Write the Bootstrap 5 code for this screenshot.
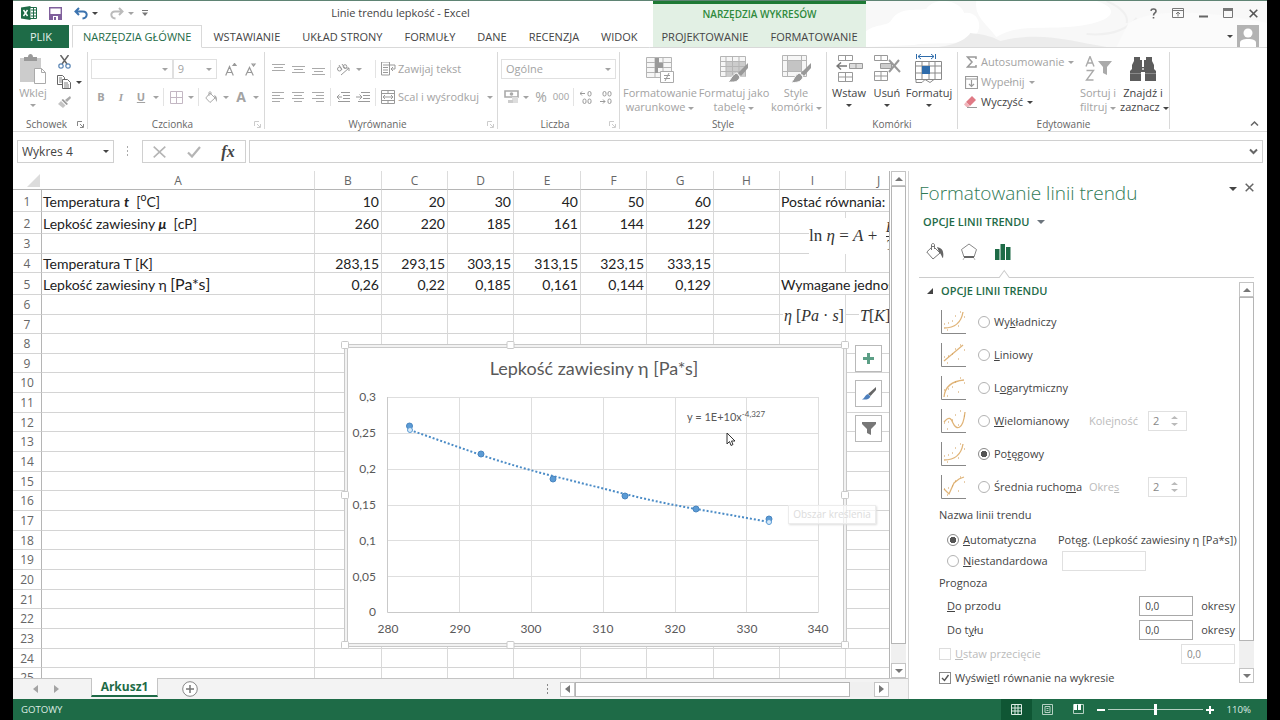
<!DOCTYPE html>
<html lang="pl">
<head>
<meta charset="utf-8">
<meta name="viewport" content="width=device-width, initial-scale=1">
<title>Linie trendu lepkość - Excel</title>
<link href="https://cdn.jsdelivr.net/npm/bootstrap@5.3.0/dist/css/bootstrap.min.css" rel="stylesheet">
<style>
:root{--xl:#1e6b47;--ink:#444;--dim:#a3a3a3;--rule:#d9d9d9;--ui:"Open Sans","Noto Sans",sans-serif;--cell:Lato,"Open Sans",sans-serif}
body{background:#000;font-family:var(--ui);font-size:11px;line-height:14px;color:var(--ink);padding:0 13px}
.xl-app{min-height:100vh;background:#fff;border-top:1px solid #5f8474}
button{border:0;background:none;padding:0;color:inherit;font:inherit;line-height:inherit}
select,input{font:inherit;color:inherit;border-radius:0}
svg{display:block;flex:none}
.off{color:var(--dim)}
.crt{display:inline-block;border:3px solid transparent;border-top-color:currentColor;border-bottom:0;vertical-align:middle;flex:none}
/* title bar and tabs */
.xl-top{height:47px}
.xl-left{width:640px}
.xl-title{height:24px;font-size:11px}
.xl-tabs{height:23px;font-size:11px}
.xl-tab{height:23px;padding:0 11px;color:var(--ink);text-decoration:none;line-height:23px;white-space:nowrap;border-bottom:1px solid var(--rule)}
.xl-file{background:var(--xl);color:#e5f1ea;width:56px;text-align:center;border-color:var(--xl);padding:0}
.xl-tab.on{color:var(--xl);border:1px solid var(--rule);border-bottom-color:#fff;margin-left:3px;padding:0 10px;line-height:21px}
.xl-ctx{width:213px;background:#e2f0e4;border-top:3px solid #1e7a35}
.xl-ctx .cap{height:21px;font-size:10px;line-height:20px;color:#2f8a3c}
.xl-art{background:#fdfdfd;border-bottom:1px solid var(--rule)}
.xl-art>svg.sky{position:absolute;inset:0;width:100%;height:100%}
.gap5{gap:5px}
/* ribbon */
.xl-ribbon{height:84px;border-bottom:1px solid var(--rule)}
.grp{border-right:1px solid var(--rule);margin:4px 0 2px;height:77px;padding:0 3px}
.grp .body{height:66px}
.grp .cap{font-size:10px;line-height:12px;height:12px;color:#666}
.g1{width:75px}.g2{width:177px}.g3{width:233px}.g4{width:122px}.g5{width:207px}.g6{width:131px}.g7{width:212px}
.bg1{line-height:14px;text-align:center;white-space:nowrap;align-self:flex-start}
.bg1 .pic{height:34px;display:flex;align-items:center;justify-content:center}
.w38{width:38px}.w44{width:44px}.w46{width:46px}.w50{width:50px}.w74{width:74px}
.c20{width:20px;height:20px;display:flex;align-items:center;justify-content:center;flex:none}
.c10{width:10px;height:20px;display:flex;align-items:center;justify-content:center;flex:none}
.sp{width:1px;height:18px;background:#e3e3e3;margin:0 2px;flex:none}
.rw{height:20px;display:flex;align-items:center;white-space:nowrap}
.two{padding-top:7px;gap:8px}
.drop{position:relative;border:1px solid #e0e0e0;height:20px;display:flex;align-items:center}
.drop select{appearance:none;border:0;background:none;width:100%;padding:0 4px;outline:0;height:18px;opacity:1}
.drop .crt{position:absolute;right:4px}
/* formula bar */
.xl-fx{padding:8px 4px 9px;height:39px}
.bx{border:1px solid #d0d0d0;height:23px}
.namebox{width:97px;font-size:12px}
.fxdots{width:28px;padding-right:1px}
.fxb{width:104px;margin-right:3px}
.fxn{font-family:"Liberation Serif",serif}
/* sheet */
.sheet{overflow:hidden;position:relative;min-height:506px}
.grid{table-layout:fixed;width:1165px;border-collapse:separate;border-spacing:0;font-family:var(--cell);font-size:14px;line-height:18px;color:#222}
.grid th{font-family:var(--ui);font-weight:400;font-size:12px;color:#666;text-align:center;padding:0;border-right:1px solid #dcdcdc;border-bottom:1px solid #d4d4d4}
.grid thead th{height:19px;border-bottom-color:#b5b5b5;line-height:17px}
.grid tbody th{border-right-color:#b5b5b5}
.grid td{padding:0 2px 0 1px;border-right:1px solid #d9d9d9;border-bottom:1px solid #d4d4d4;white-space:nowrap;height:20px}
.grid .num{text-align:right}
.grid .big{font-size:16px}
.h22 th,.h22 td{height:22px!important;padding-top:2px!important}
.h19 th,.h19 td{height:19px!important;line-height:17px}
.h20 th,.h20 td{height:20px!important}
.corner{border-right:0!important}
.corner svg{margin-left:auto;margin-right:2px}
.math{position:absolute;background:#fff;font-family:"Liberation Serif",serif;font-size:16px;line-height:20px;color:#333;white-space:nowrap}
.eq1{left:796px;top:47px;height:36px;font-size:17px}
.eq2{left:770px;top:135px;height:20px;padding:0 1px}
.eq3{left:846px;top:135px;height:20px;padding:0 1px}
.frac{font-size:15px;line-height:17px;text-align:center}
.frac span:first-child{border-bottom:1px solid #333}
.chart{position:absolute;left:328px;top:170px}
.side{position:absolute;left:842px;top:174px;gap:8px}
.side button{width:27px;height:27px;border:1px solid #b9b9b9;background:#fff;display:flex;align-items:center;justify-content:center}
.tip0{position:absolute;left:775px;top:334px;width:88px;height:19px;background:#ffffffb0;border:1px solid #ececec;box-shadow:1px 1px 2px #ddd;color:#dcdcdc;font-size:10px;line-height:17px;text-align:center}
.ptr{position:absolute;left:713px;top:261px}
/* scrollbars */
.vs{width:15px}
.sb{border:1px solid #c4c4c4;background:#fff;display:flex;align-items:center;justify-content:center;color:#777;flex:none;width:15px;height:15px}
.trk{background:#f0f0f0}
.thumb{background:#fff;border:1px solid #b5b5b5}
.up{border:4px solid transparent;border-bottom-color:currentColor;border-top:0}
.dn{border:4px solid transparent;border-top-color:currentColor;border-bottom:0}
.lf{border:4px solid transparent;border-right:5px solid currentColor;border-left:0}
.rt{border:4px solid transparent;border-left:5px solid currentColor;border-right:0}
.xl-vs{width:19px;padding:0 2px 0 1px;border-left:1px solid #b5b5b5}
.v90{height:458px}
.v80{height:344px}
.xl-bar{height:21px;background:#f3f3f3;border-top:1px solid #c4c4c4}
.xl-bar .tabx{width:67px;height:19px;margin-top:-1px;background:#fff;border:1px solid #c4c4c4;border-top:0;border-bottom:2px solid var(--xl);color:var(--xl);font-weight:700;font-size:12px}
.hs{width:329px;margin-right:19px}
.hthumb{width:275px;height:15px}
/* pane */
.pane{width:359px;border-left:1px solid #d4d4d4;padding-left:10px;padding-right:13px}
.pane h2{font-size:19px;line-height:28px;font-weight:300;color:#2f7a56;margin:0}
.pane h3{font-size:11px;line-height:14px;font-weight:600;color:var(--xl);margin:0}
.picks{padding:14px 0 0 7px}
.pane .sect{height:18px}
.pane .list0{padding:5px 0 1px 22px}
.opt{height:33px;display:flex;align-items:center}
.opt>svg{margin-right:11px}
.opt label,.ln label{white-space:nowrap}
.rad{appearance:none;width:12px;height:12px;border:1px solid #b3b3b3;border-radius:50%;margin:0;flex:none;background:#fff}
.rad:checked{border-color:#8a8a8a;background:radial-gradient(circle,#555 0 3px,#fff 3px)}
.chk{appearance:none;width:12px;height:12px;border:1px solid #8a8a8a;margin:0;flex:none;background:#fff}
.chk:disabled{border-color:#ddd}
.optn{width:95px}
.lead0{width:59px}
.spin{width:39px;height:20px;border:1px solid #e0e0e0;color:#888;display:flex;align-items:center}
.spin input{width:22px;border:0;background:none;padding:0 0 0 4px;outline:0}
.ln{display:flex;align-items:center;height:24px;white-space:nowrap}
.ln22{height:22px}
.fld{border:1px solid #a8a8a8;height:20px;width:54px;padding:0 5px;font-size:10px;background:#fff}
.fld:disabled{border-color:#e0e0e0;color:#888;background:#fff}
.fldw{width:84px}
.unit{padding:0 4px 0 8px}
.fgrey{font-size:11px;color:#bbb}
/* status */
.xl-status{height:21px;background:var(--xl);color:#dcebe3}
.vw{width:31px;height:21px;display:flex;align-items:center;justify-content:center}
.vw.on{background:#0f5634}
.zoom0{appearance:none;width:95px;height:12px;background:linear-gradient(#b5d0c2,#b5d0c2) center/100% 1px no-repeat;margin:0 3px}
.zoom0::-webkit-slider-thumb{appearance:none;width:3px;height:11px;background:#fff}
.zoomtext{padding-left:13px}
.zoomout{margin-left:3px}
</style>
</head>
<body>
<div class="xl-app d-flex flex-column">

<header class="xl-top d-flex">
  <div class="xl-left d-flex flex-column">
    <div class="xl-title d-flex align-items-center">
      <div class="d-flex align-items-center ps-2">
        <svg width="16" height="14" viewBox="0 0 16 14"><path d="M9 1.500h6.500v11H9" fill="#fff" stroke="#1e6b47"/><path d="M10 4h5M10 7h5M10 10h5M12.500 2v10" stroke="#1e6b47"/><path d="M0 1.500 9.500 0v14L0 12.500z" fill="#1e6b47"/><path d="m2.500 4 4 6M6.500 4l-4 6" stroke="#fff" stroke-width="1.400"/></svg>
        <button class="ms-2 ps-1" aria-label="Zapisz"><svg width="13" height="13" viewBox="0 0 13 13"><path d="M.7.7h11.600v11.600H.7z" fill="#fff" stroke="#80609c" stroke-width="1.400"/><path d="M1 7h11v5H1z" fill="#80609c"/><path d="M4 9h5v4H4z" fill="#fff"/><path d="M5 10h2v3H5z" fill="#80609c"/></svg></button>
        <button class="ms-2 ps-1" aria-label="Cofnij"><svg width="14" height="13" viewBox="0 0 14 13"><path d="M5 1 1.500 4.500 5 8M2 4.500h7c5 0 5 6.500-.5 7" fill="none" stroke="#3b73af" stroke-width="2"/></svg></button>
        <span class="crt ms-1"></span>
        <button class="ms-2 ps-1 off" aria-label="Ponów"><svg width="14" height="13" viewBox="0 0 14 13"><path d="M9 1l3.500 3.500L9 8M12 4.500H5C0 4.500 0 11 5.500 11.500" fill="none" stroke="#bbb" stroke-width="2"/></svg></button>
        <span class="crt ms-1 off"></span>
        <button class="ms-1 ps-1" aria-label="Dostosuj"><svg width="6" height="6" viewBox="0 0 6 6"><path d="M0 .5h6" stroke="#777"/><path d="M0 2.500h6L3 6z" fill="#777"/></svg></button>
      </div>
      <div class="flex-grow-1 text-center">Linie trendu lepkość - Excel</div>
    </div>
    <nav class="xl-tabs d-flex">
      <a href="#" class="xl-tab xl-file">PLIK</a>
      <a href="#" class="xl-tab on">NARZĘDZIA GŁÓWNE</a>
      <a href="#" class="xl-tab">WSTAWIANIE</a>
      <a href="#" class="xl-tab">UKŁAD STRONY</a>
      <a href="#" class="xl-tab">FORMUŁY</a>
      <a href="#" class="xl-tab">DANE</a>
      <a href="#" class="xl-tab">RECENZJA</a>
      <a href="#" class="xl-tab">WIDOK</a>
      <span class="flex-grow-1 border-bottom"></span>
    </nav>
  </div>
  <div class="xl-ctx">
    <div class="cap text-center fw-semibold">NARZĘDZIA WYKRESÓW</div>
    <nav class="d-flex justify-content-center"><a href="#" class="xl-tab">PROJEKTOWANIE</a><a href="#" class="xl-tab">FORMATOWANIE</a></nav>
  </div>
  <div class="xl-art flex-grow-1 position-relative">
    <svg class="sky" viewBox="0 0 400 46" preserveAspectRatio="none"><path d="M0 0h400v46H0z" fill="#f8f8f8"/><path d="M0 46V30c12-8 22-4 26-12 8-12 24-8 34-10 10-14 34-8 38 4 14-2 20 14 10 24-12 10-40 4-60 8z" fill="#fff"/><path d="M110 0h120c30 10 10 24-30 26-30 2-50-2-70 10-10-14-22-20-20-36z" fill="#fff"/><path d="M72 46c20-2 30-10 32-14 20 2 26 6 30 8 40-10 70 0 106 6z" fill="#ececec"/><path d="M220 33c24 2 40-4 50-16M240 0c14 6 22 14 20 22" fill="none" stroke="#f0f0f0" stroke-width="2"/><path d="M262 22c24-14 70-14 138 0v24H250z" fill="#fbfbfb"/></svg>
    <div class="position-relative d-flex justify-content-end align-items-center gap5 pe-1 xl-title">
      <button class="c20" aria-label="Pomoc"><svg width="7" height="11" viewBox="0 0 7 11"><path d="M1 2.800C1.300.4 6 .4 6 3.200 6 5 3.500 5 3.500 7.500M3.500 9v1.500" fill="none" stroke="#666" stroke-width="1.600"/></svg></button>
      <button class="c20" aria-label="Opcje wyświetlania wstążki"><svg width="12" height="10" viewBox="0 0 12 10"><path d="M.5.5h11v9H.5zM.5 2.500h11M6 8.500V4M4 6l2-2 2 2" fill="none" stroke="#777"/></svg></button>
      <button class="c20" aria-label="Minimalizuj"><svg width="9" height="9" viewBox="0 0 9 9"><path d="M0 7.500h9" stroke="#666" stroke-width="2"/></svg></button>
      <button class="c20" aria-label="Maksymalizuj"><svg width="10" height="10" viewBox="0 0 10 10"><path d="M.5.5h9v9h-9z" fill="none" stroke="#777"/><path d="M0 0h10v3H0z" fill="#777"/></svg></button>
      <button class="c20" aria-label="Zamknij"><svg width="9" height="9" viewBox="0 0 9 9"><path d="m.7.700 7.600 7.600M8.300.700.7 8.300" stroke="#555" stroke-width="1.600"/></svg></button>
    </div>
    <div class="position-relative d-flex justify-content-end align-items-center pe-2">
      <span class="crt me-1"></span>
      <svg width="22" height="22" viewBox="0 0 22 22"><path d="M0 0h22v22H0z" fill="#b3b3b3"/><circle cx="11" cy="8" r="4.500" fill="#fff"/><path d="M3 22v-4c0-3 3-4 8-4s8 1 8 4v4z" fill="#fff"/></svg>
    </div>
  </div>
</header>

<section class="xl-ribbon d-flex">
  <div class="grp g1">
    <div class="body d-flex">
      <button class="bg1 off w38 d-flex flex-column align-items-center"><span class="pic"><svg width="26" height="30" viewBox="0 0 26 30"><path d="M0 4h21v24H0z" fill="#ccc"/><path d="M4 3h4c0-4 5-4 5 0h4v4H4z" fill="#999"/><path d="M14.500 14.500h7l4 4v11h-11z" fill="#fff" stroke="#aaa"/><path d="M21.500 14.500v4h4" fill="none" stroke="#aaa"/></svg></span>Wklej<span class="crt mt-1"></span></button>
      <div class="d-flex flex-column ps-1">
        <button class="c20" aria-label="Wytnij"><svg width="13" height="14" viewBox="0 0 13 14"><path d="m2.500 0 6.500 9M10.500 0 4 9" stroke="#666" stroke-width="1.500"/><circle cx="3" cy="11" r="2.200" fill="none" stroke="#5b86b5" stroke-width="1.200"/><circle cx="10" cy="11" r="2.200" fill="none" stroke="#5b86b5" stroke-width="1.200"/></svg></button>
        <div class="d-flex"><button class="c20" aria-label="Kopiuj"><svg width="14" height="14" viewBox="0 0 14 14"><path d="M.5.500h5l2 2v7h-7z" fill="#fff" stroke="#666"/><path d="M5.500 4.500h5l3 3v6h-8z" fill="#fff" stroke="#666"/><path d="M2 3h3M2 5h3M2 7h3M7 8h4M7 10h5M7 12h5" stroke="#666" stroke-width=".8"/></svg></button><span class="c10"><span class="crt"></span></span></div>
        <button class="c20" aria-label="Malarz formatów"><svg width="13" height="12" viewBox="0 0 13 12"><path d="M12 0 13 2 9 6 7 4z" fill="#aaa"/><path d="m5 3 5 5-1.500 1-5-5z" fill="#999"/><path d="M3 5l4.500 4.500L5 12 0 8z" fill="#c4c4c4"/></svg></button>
      </div>
    </div>
    <div class="cap d-flex"><span class="flex-grow-1 text-center">Schowek</span><svg width="7" height="12" viewBox="0 0 7 12"><path d="M.5 8V3.500H5M3 6l3 3M6.500 6v3.500H3" fill="none" stroke="#888"/></svg></div>
  </div>

  <div class="grp g2 off">
    <div class="body d-flex flex-column two">
      <div class="rw"><div class="drop w-50"><select disabled aria-label="Czcionka"><option></option></select><span class="crt"></span></div><div class="drop w46"><select disabled class="off" aria-label="Rozmiar"><option>9</option></select><span class="crt"></span></div>
        <button class="c20 ms-1" aria-label="Zwiększ rozmiar"><svg width="12" height="13" viewBox="0 0 12 13"><path d="M.7 12.500 4.500 3.500l3.800 9M2 9.500h5M8 2.500l1.500-2 1.500 2z" fill="none" stroke="#999" stroke-width="1.200"/></svg></button><button class="c20" aria-label="Zmniejsz rozmiar"><svg width="12" height="13" viewBox="0 0 12 13"><path d="M.7 12.500 4.500 4.500l3.800 8M2 9.500h5M7 1l1.500 2L10 1z" fill="none" stroke="#999" stroke-width="1.200"/></svg></button></div>
      <div class="rw"><button class="c20 fw-bold">B</button><button class="c20 fst-italic fw-bold fxn">I</button><button class="c20 fw-bold text-decoration-underline">U</button><span class="c10"><span class="crt"></span></span><i class="sp"></i>
        <button class="c20" aria-label="Obramowanie"><svg width="13" height="13" viewBox="0 0 13 13"><path d="M.5.5h12v12H.5zM6.500 0v13M0 6.500h13" fill="none" stroke="#c3b7c3"/></svg></button><span class="c10"><span class="crt"></span></span><i class="sp"></i>
        <button class="c20" aria-label="Kolor wypełnienia"><svg width="13" height="13" viewBox="0 0 13 13"><path d="m5 2 5 5-5 4.500L.8 7zM4 5V1.500c0-1 2-1 2 0V4" fill="none" stroke="#aaa"/><path d="M9 4c3 1 3.500 4 2.500 7L10 7z" fill="#aaa"/></svg></button><span class="c10"><span class="crt"></span></span>
        <button class="c20 fw-bold fs-6"><small>A</small></button><span class="c10"><span class="crt"></span></span></div>
    </div>
    <div class="cap d-flex"><span class="flex-grow-1 text-center">Czcionka</span><svg width="7" height="12" viewBox="0 0 7 12"><path d="M.5 8V3.500H5M3 6l3 3M6.500 6v3.500H3" fill="none" stroke="#ccc"/></svg></div>
  </div>

  <div class="grp g3 off">
    <div class="body d-flex flex-column two">
      <div class="rw">
        <button class="c20" aria-label="Do góry"><svg width="13" height="13" viewBox="0 0 13 13"><path d="M0 1.500h13M2 4.500h9M0 7.500h13" stroke="#aaa"/></svg></button><button class="c20" aria-label="Do środka"><svg width="13" height="13" viewBox="0 0 13 13"><path d="M0 3.500h13M2 6.500h9M0 9.500h13" stroke="#aaa"/></svg></button><button class="c20" aria-label="Do dołu"><svg width="13" height="13" viewBox="0 0 13 13"><path d="M0 5.500h13M2 8.500h9M0 11.500h13" stroke="#aaa"/></svg></button><i class="sp"></i>
        <button class="c20" aria-label="Orientacja"><svg width="15" height="13" viewBox="0 0 15 13"><circle cx="3.500" cy="6" r="2" fill="none" stroke="#999"/><path d="M3 2l3 5M6 1l3.500 5" stroke="#999"/><circle cx="9" cy="3.500" r="1.800" fill="none" stroke="#999"/><path d="m5 12 8-7M13 8V5h-3" fill="none" stroke="#999"/></svg></button><span class="c20"><span class="crt me-2"></span></span><i class="sp"></i>
        <button class="rw"><span class="c20"><svg width="15" height="14" viewBox="0 0 15 14"><path d="M.5 0h8v13h-8zM2 3h12v4h-4M12 5l-2 2 2 2M2 5.500h5M2 8h5M2 10.500h5" fill="none" stroke="#999"/></svg></span>Zawijaj tekst</button>
      </div>
      <div class="rw">
        <button class="c20" aria-label="Do lewej"><svg width="12" height="10" viewBox="0 0 12 10"><path d="M0 .5h12M0 3.500h8M0 6.500h12M0 9.500h8" stroke="#aaa"/></svg></button><button class="c20" aria-label="Wyśrodkuj"><svg width="12" height="10" viewBox="0 0 12 10"><path d="M0 .5h12M2 3.500h8M0 6.500h12M2 9.500h8" stroke="#aaa"/></svg></button><button class="c20" aria-label="Do prawej"><svg width="12" height="10" viewBox="0 0 12 10"><path d="M0 .5h12M4 3.500h8M0 6.500h12M4 9.500h8" stroke="#aaa"/></svg></button><i class="sp"></i>
        <button class="c20" aria-label="Zmniejsz wcięcie"><svg width="14" height="10" viewBox="0 0 14 10"><path d="M5 .5h9M7 3.500h7M7 6.500h7M2 9.500h12M6 5H1M3.500 2.500 1 5l2.500 2.500" fill="none" stroke="#999"/></svg></button><button class="c20" aria-label="Zwiększ wcięcie"><svg width="14" height="10" viewBox="0 0 14 10"><path d="M5 .5h9M7 3.500h7M7 6.500h7M2 9.500h12M0 5h6M3.500 2.500 6 5 3.500 7.500" fill="none" stroke="#999"/></svg></button><i class="sp"></i>
        <button class="rw"><span class="c20"><svg width="14" height="14" viewBox="0 0 14 14"><path d="M.5.5h13v13H.5zM.5 3.500h13M.5 10.500h13M7 0v3.500M7 10.500V14M2 7h10M4 5 2 7l2 2M10 5l2 2-2 2" fill="none" stroke="#999"/></svg></span>Scal i wyśrodkuj<span class="crt ms-2"></span></button>
      </div>
    </div>
    <div class="cap d-flex"><span class="flex-grow-1 text-center">Wyrównanie</span><svg width="7" height="12" viewBox="0 0 7 12"><path d="M.5 8V3.500H5M3 6l3 3M6.500 6v3.500H3" fill="none" stroke="#ccc"/></svg></div>
  </div>

  <div class="grp g4 off">
    <div class="body d-flex flex-column two">
      <div class="drop"><select disabled class="off px-1" aria-label="Format liczb"><option>Ogólne</option></select><span class="crt"></span></div>
      <div class="rw"><button class="c20" aria-label="Waluta"><svg width="15" height="14" viewBox="0 0 15 14"><path d="M1 1h13v6H1z" fill="none" stroke="#aaa" stroke-width="1.600"/><circle cx="7.500" cy="4" r="1.800" fill="#aaa"/><path d="M8 7h6v6H8z" fill="#ddd"/><path d="M4 10h5v3H4z" fill="#ccc"/></svg></button><span class="c10"><span class="crt"></span></span><button class="c20 fs-6"><small>%</small></button><button class="c20"><small>000</small></button><i class="sp"></i>
        <button class="c20" aria-label="Zwiększ dziesiętne"><svg width="12" height="13" viewBox="0 0 12 13"><path d="M5 2.500H0M2 .5l-2 2 2 2" fill="none" stroke="#999"/><rect x="8" y=".5" width="3" height="4.500" rx="1.500" fill="none" stroke="#999"/><rect x="3" y="8" width="3" height="4.500" rx="1.500" fill="none" stroke="#999"/><rect x="8" y="8" width="3" height="4.500" rx="1.500" fill="none" stroke="#999"/></svg></button><button class="c20" aria-label="Zmniejsz dziesiętne"><svg width="12" height="13" viewBox="0 0 12 13"><path d="M0 10.500h5M3 8.500l2 2-2 2" fill="none" stroke="#999"/><rect x="3" y=".5" width="3" height="4.500" rx="1.500" fill="none" stroke="#999"/><rect x="8" y=".5" width="3" height="4.500" rx="1.500" fill="none" stroke="#999"/><rect x="8" y="8" width="3" height="4.500" rx="1.500" fill="none" stroke="#999"/></svg></button></div>
    </div>
    <div class="cap d-flex"><span class="flex-grow-1 text-center">Liczba</span><svg width="7" height="12" viewBox="0 0 7 12"><path d="M.5 8V3.500H5M3 6l3 3M6.500 6v3.500H3" fill="none" stroke="#ccc"/></svg></div>
  </div>

  <div class="grp g5 off">
    <div class="body d-flex">
      <button class="bg1 w74"><span class="pic"><svg width="28" height="28" viewBox="0 0 28 28"><path d="M.5 2.500h25v20H.5zM.5 7.500h25M.5 12.500h25M.5 17.500h25M9 2v21M17 2v21" fill="#f6f6f6" stroke="#b5b5b5"/><path d="M9 3h4v5h4v5h-5v5H9z" fill="#999"/><path d="M14.500 16.500h13v11h-13z" fill="#fff" stroke="#aaa"/><path d="M18 20.500h6M18 23.500h6M23 18l-4 8" stroke="#999"/></svg></span>Formatowanie<br>warunkowe <span class="crt"></span></button>
      <button class="bg1 w74"><span class="pic"><svg width="28" height="28" viewBox="0 0 28 28"><path d="M.5 1.500h25v20H.5z" fill="#f6f6f6" stroke="#b5b5b5"/><path d="M6 7h19v15H6z" fill="#ccc"/><path d="M.5 6.500h25M.5 11.500h25M.5 16.500h25M6 1v21M12.500 1v21M19 1v21" stroke="#b5b5b5"/><path d="M28 8v5l-7 8-3-3z" fill="#999"/><path d="M17 18l3 4c-2 6-7 5-12 5 3-2 4-8 9-9z" fill="#999" stroke="#fff"/></svg></span>Formatuj jako<br>tabelę <span class="crt"></span></button>
      <button class="bg1 w50"><span class="pic"><svg width="29" height="29" viewBox="0 0 29 29"><path d="M.5.500h24v21H.5zM.5 5.500h24M.5 16.500h24M5.500.500v21M19.500.500v21" fill="#f6f6f6" stroke="#b5b5b5"/><path d="M6 6h13v10H6z" fill="#c4c4c4"/><path d="M29 8v5l-7 8-3-3z" fill="#999"/><path d="M18 18l3 4c-2 6-7 5-12 6 3-3 4-9 9-10z" fill="#999" stroke="#fff"/></svg></span>Style<br>komórki <span class="crt"></span></button>
    </div>
    <div class="cap text-center">Style</div>
  </div>

  <div class="grp g6">
    <div class="body d-flex">
      <button class="bg1 w38 d-flex flex-column align-items-center"><span class="pic"><svg width="27" height="28" viewBox="0 0 27 28"><path d="M2.500.5h14v5h-14zM9.500.5v5M2.500 17.500h14v9h-14zM9.500 17.500v9M2.500 22h14" fill="#fff" stroke="#999"/><path d="M13.500 8.500h13v5h-13zM20 8.500v5" fill="#ddd" stroke="#999"/><path d="M11 11H1M5 7.500 1 11l4 3.500" fill="none" stroke="#777" stroke-width="1.500"/></svg></span>Wstaw<span class="crt mt-1"></span></button>
      <button class="bg1 w38 d-flex flex-column align-items-center"><span class="pic"><svg width="27" height="28" viewBox="0 0 27 28"><path d="M.5.5h13v5H.5zM7 .5v5M.5 16.500h13v9H.5zM7 16.500v9M.5 21h13" fill="#fff" stroke="#999"/><path d="M6.500 8.500h11v5h-11z" fill="#ccc" stroke="#999"/><path d="m15 5 11 12M25 5 15 17" stroke="#999" stroke-width="2"/></svg></span>Usuń<span class="crt mt-1"></span></button>
      <button class="bg1 w46 d-flex flex-column align-items-center"><span class="pic"><svg width="28" height="30" viewBox="0 0 28 30"><path d="M1.500 0v5M20.500 0v5M3 2.500h16M6 0 3 2.500 6 5M16 0l3 2.500L16 5" fill="none" stroke="#2f6cab"/><path d="M.5 7.500h26v18H.5zM.5 12h26M.5 19h26M7 7.500v18M14 7.500v18M20 7.500v18M1 25.500v3h6l3-3 5 3 4-3" fill="#fff" stroke="#8a8a8a"/><path d="M7 12h8v8H7z" fill="#2f6cab"/></svg></span>Formatuj<span class="crt mt-1"></span></button>
    </div>
    <div class="cap text-center">Komórki</div>
  </div>

  <div class="grp g7">
    <div class="body d-flex">
      <div class="d-flex flex-column flex-grow-1 pt-0">
        <button class="rw off"><span class="c20"><svg width="11" height="12" viewBox="0 0 11 12"><path d="M10 3V1H1.500L6 6l-4.500 5H10V9" fill="none" stroke="#999" stroke-width="1.500"/></svg></span>Autosumowanie <span class="crt ms-1"></span></button>
        <button class="rw off"><span class="c20"><svg width="13" height="13" viewBox="0 0 13 13"><path d="M.5.500h12v12H.5zM.5 3h12M6.500 4v6M4 8l2.500 2.500L9 8" fill="none" stroke="#999" stroke-width="1.200"/></svg></span>Wypełnij <span class="crt ms-1"></span></button>
        <button class="rw"><span class="c20"><svg width="14" height="12" viewBox="0 0 14 12"><path d="M8 0l4 4-6 6-4-4z" fill="#e07a85"/><path d="M2 6l4 4-1.500 1H2.500L0 8.500z" fill="#f0b5bb"/><path d="M3 11.500h10" stroke="#999"/></svg></span>Wyczyść <span class="crt ms-1"></span></button>
      </div>
      <button class="bg1 w44 off"><span class="pic"><svg width="27" height="26" viewBox="0 0 27 26"><path d="M1 10.500 5 .5l4 10M2.500 7h5M1.500 14.500h7L1.500 24h7" fill="none" stroke="#aaa" stroke-width="1.400"/><path d="M13 5h14l-5 6v8l-4-2v-6z" fill="#aaa"/></svg></span>Sortuj i<br>filtruj <span class="crt"></span></button>
      <button class="bg1 w46"><span class="pic"><svg width="26" height="24" viewBox="0 0 26 24"><path d="M4 0h6v3h2v7h2V3h2V0h6v4l2 4v4l2 2v10H15v-9h-4v9H0V14l2-2V8l2-4z" fill="#5c5c5c"/><path d="M0 16.500h11M15 16.500h11" stroke="#8a8a8a"/><circle cx="13" cy="12" r="1" fill="#ddd"/></svg></span>Znajdź i<br>zaznacz <span class="crt"></span></button>
    </div>
    <div class="cap text-center">Edytowanie</div>
  </div>
  <div class="flex-grow-1 d-flex justify-content-end align-items-end pe-2 pb-1"><button aria-label="Zwiń wstążkę"><svg width="9" height="7" viewBox="0 0 9 7"><path d="M1 5.500 4.500 2 8 5.500" fill="none" stroke="#666" stroke-width="1.500"/></svg></button></div>
</section>

<section class="xl-fx d-flex">
  <div class="drop bx namebox"><select aria-label="Pole nazwy"><option>Wykres 4</option></select><span class="crt"></span></div>
  <div class="fxdots d-flex align-items-center justify-content-center"><svg width="3" height="11" viewBox="0 0 3 11"><path d="M1.500 0v2M1.500 4v2M1.500 8v2" stroke="#aaa"/></svg></div>
  <div class="bx fxb d-flex align-items-center justify-content-around">
    <button aria-label="Anuluj"><svg width="13" height="12" viewBox="0 0 13 12"><path d="m.7.700 11.600 10.600M12.300.700.7 11.300" stroke="#b5b5b5" stroke-width="1.600"/></svg></button>
    <button aria-label="Wpis"><svg width="14" height="12" viewBox="0 0 14 12"><path d="m1 6.500 4 4L13 1" fill="none" stroke="#b5b5b5" stroke-width="2.200"/></svg></button>
    <button class="fst-italic fw-bold fs-6 fxn" aria-label="Wstaw funkcję">fx</button>
  </div>
  <div class="bx flex-grow-1 d-flex align-items-center pe-1"><input class="flex-grow-1 border-0" aria-label="Pasek formuły"><svg width="9" height="7" viewBox="0 0 9 7"><path d="M1 1.500 4.500 5 8 1.500" fill="none" stroke="#666" stroke-width="2"/></svg></div>
</section>

<main class="d-flex flex-grow-1">
  <div class="d-flex flex-column flex-grow-1 overflow-hidden">
    <div class="d-flex flex-grow-1">
      <div class="sheet flex-grow-1">
        <table class="grid position-absolute">
          <colgroup><col style="width:29px"><col style="width:273px"><col style="width:67px"><col style="width:66px"><col style="width:66px"><col style="width:67px"><col style="width:66px"><col style="width:67px"><col style="width:66px"><col style="width:66px"><col style="width:66px"><col></colgroup>
          <thead><tr><th class="corner"><svg width="13" height="13" viewBox="0 0 13 13"><path d="M13 0v13H0z" fill="#dcdcdc"/></svg></th><th>A</th><th>B</th><th>C</th><th>D</th><th>E</th><th>F</th><th>G</th><th>H</th><th>I</th><th>J</th><th>K</th></tr></thead>
          <tbody id="rows"></tbody>
        </table>
        <div class="math eq1 d-flex align-items-center">ln&nbsp;<i>η</i>&nbsp;=&nbsp;<i>A</i>&nbsp;+&nbsp;&nbsp;<div class="frac d-flex flex-column"><span><i>B</i></span><span><i>T</i></span></div></div>
        <div class="math eq2"><i>η</i> [<i>Pa</i> · <i>s</i>]</div>
        <div class="math eq3"><i>T</i>[<i>K</i>]</div>

        <svg class="chart" width="508" height="308" viewBox="-4 -4 508 308" font-family="Lato,sans-serif">
          <rect x="1" y="1" width="499" height="299" fill="#fff" stroke="#c9c9c9" stroke-width="4"/>
          <rect x="1" y="1" width="499" height="299" fill="none" stroke="#f2f2f2" stroke-width="2"/>
          <g stroke="#dedede" fill="none">
            <path d="M43 52.500h431M43 88.500h431M43 124.500h431M43 160.500h431M43 195.500h431M43 231.500h431"/>
            <path d="M114.500 52v215M186.500 52v215M258.500 52v215M330.500 52v215M401.500 52v215M473.500 52v215"/>
            <path d="M42.500 52v215.500h431" stroke="#c9c9c9"/>
          </g>
          <g font-size="12" fill="#595959" text-anchor="end">
            <text x="31" y="56">0,3</text><text x="31" y="92">0,25</text><text x="31" y="128">0,2</text><text x="31" y="164">0,15</text><text x="31" y="200">0,1</text><text x="31" y="236">0,05</text><text x="31" y="271">0</text>
          </g>
          <g font-size="12" fill="#595959" text-anchor="middle">
            <text x="43" y="288">280</text><text x="115" y="288">290</text><text x="186" y="288">300</text><text x="258" y="288">310</text><text x="330" y="288">320</text><text x="402" y="288">330</text><text x="473" y="288">340</text>
          </g>
          <text x="249" y="30" font-size="18" fill="#595959" text-anchor="middle">Lepkość zawiesiny η [Pa*s]</text>
          <text x="342" y="76" font-size="11" fill="#595959">y = 1E+10x<tspan dy="-4" font-size="8">-4,327</tspan></text>
          <path d="M65 85 136 110Q172 122 208 131T280 149T351 164T424 177" fill="none" stroke="#4a8bc6" stroke-width="2" stroke-dasharray="2 2"/>
          <g fill="#5b9bd5" stroke="#4a86c0"><circle cx="64.500" cy="81" r="3"/><circle cx="136" cy="109" r="3"/><circle cx="208" cy="134" r="3"/><circle cx="280" cy="151" r="3"/><circle cx="351" cy="164" r="3"/><circle cx="424" cy="174" r="3"/></g>
          <g fill="#d8ebfa" stroke="#5b9bd5"><circle cx="65" cy="85" r="2.500"/><circle cx="424" cy="177" r="2.500"/></g>
          <g fill="#fff" stroke="#c9c9c9"><rect x="-3.500" y="-3.500" width="7" height="7" rx="1"/><rect x="162" y="-3.500" width="7" height="7" rx="1"/><rect x="496.500" y="-3.500" width="7" height="7" rx="1"/><rect x="-3.500" y="146.500" width="7" height="7" rx="1"/><rect x="496.500" y="146.500" width="7" height="7" rx="1"/><rect x="-3.500" y="296.500" width="7" height="7" rx="1"/><rect x="162" y="296.500" width="7" height="7" rx="1"/><rect x="496.500" y="296.500" width="7" height="7" rx="1"/></g>
        </svg>
        <svg class="ptr" width="10" height="15" viewBox="0 0 10 15"><path d="M1 1v11l2.500-2.500L5 13.500l2-1-1.500-3.500H9z" fill="#fff" stroke="#333"/></svg>
        <div class="tip0">Obszar kreślenia</div>
        <div class="side d-flex flex-column">
          <button aria-label="Elementy wykresu"><svg width="11" height="11" viewBox="0 0 11 11"><path d="M4 0h3v4h4v3H7v4H4V7H0V4h4z" fill="#5c9f86"/></svg></button>
          <button aria-label="Style wykresu"><svg width="14" height="14" viewBox="0 0 14 14"><path d="M14 0v3L8.500 9 6 7z" fill="#666"/><path d="m6 7 2.500 2.500C7 13 4 12.500 0 12.500 3 11 3 8 6 7z" fill="#4d7fbd"/></svg></button>
          <button aria-label="Filtry wykresu"><svg width="14" height="13" viewBox="0 0 14 13"><path d="M0 0h14v2L9 7v6l-4-2V7L0 2z" fill="#777"/></svg></button>
        </div>
      </div>
      <div class="xl-vs d-flex flex-column">
        <button class="sb" aria-label="W górę"><i class="up"></i></button>
        <div class="trk vs flex-grow-1"><div class="thumb v90"></div></div>
        <button class="sb" aria-label="W dół"><i class="dn"></i></button>
      </div>
    </div>
    <div class="xl-bar d-flex align-items-center">
      <div class="d-flex off gap-3 px-3 me-3"><i class="lf ms-1"></i><i class="rt"></i></div>
      <button class="tabx align-self-start">Arkusz1</button>
      <button class="ms-4" aria-label="Nowy arkusz"><svg width="16" height="16" viewBox="0 0 16 16"><circle cx="8" cy="8" r="7.300" fill="#fff" stroke="#888"/><path d="M8 4v8M4 8h8" stroke="#777" stroke-width="1.500"/></svg></button>
      <svg class="ms-auto me-2" width="6" height="10" viewBox="0 0 6 10"><path d="M1.500 0v2M1.500 4v2M1.500 8v2" stroke="#888"/></svg>
      <div class="hs d-flex">
        <button class="sb" aria-label="W lewo"><i class="lf"></i></button>
        <div class="trk flex-grow-1"><div class="thumb hthumb"></div></div>
        <button class="sb" aria-label="W prawo"><i class="rt"></i></button>
      </div>
    </div>
  </div>

  <aside class="pane d-flex flex-column">
    <div class="d-flex pt-2"><h2 class="flex-grow-1">Formatowanie linii trendu</h2><span class="dn mt-2 me-2 align-self-start"></span><button class="align-self-start mt-1" aria-label="Zamknij okienko"><svg width="9" height="9" viewBox="0 0 9 9"><path d="m.7.700 7.600 7.600M8.300.700.7 8.300" stroke="#666" stroke-width="1.500"/></svg></button></div>
    <h3 class="mt-2 ps-1 d-flex align-items-center">OPCJE LINII TRENDU<i class="dn ms-2 text-secondary"></i></h3>
    <div class="d-flex picks">
      <button class="me-3" aria-label="Wypełnienie"><svg width="18" height="18" viewBox="0 0 18 18"><path d="m7 3 7 7-7 6L.8 9zM5.500 7V2c0-2 3-2 3 0v4" fill="none" stroke="#777"/><path d="M11 4c6 1 7 5 6 11-1 0-1.500-4-4-6z" fill="#666"/></svg></button>
      <button class="me-3" aria-label="Efekty"><svg width="18" height="18" viewBox="0 0 18 18"><path d="M9 1 16.500 6.500 14 14H4L1.500 6.500z" fill="none" stroke="#888"/><path d="M4 14h10" stroke="#666" stroke-width="2"/><path d="M4 15l-1 2M14 15l1 2" stroke="#bbb"/></svg></button>
      <button aria-label="Opcje linii trendu"><svg width="18" height="18" viewBox="0 0 18 18"><path d="M1 6h4.500v11H1zM6.500 1H11v16H6.500zM12 4h4.500v13H12z" fill="#1e6b47"/></svg></button>
    </div>
    <svg class="mt-2 w-100" height="9" viewBox="0 0 334 9" preserveAspectRatio="xMinYMin slice"><path d="M0 8.500h80l5-7 5 7h900" fill="none" stroke="#ccc"/></svg>
    <div class="d-flex flex-grow-1 pt-1">
      <div class="flex-grow-1">
        <h3 class="sect d-flex align-items-center ps-2"><svg class="me-2" width="6" height="6" viewBox="0 0 6 6"><path d="M6 0v6H0z" fill="#444"/></svg>OPCJE LINII TRENDU</h3>
        <div class="list0" id="kinds"></div>
        <div class="ps-3 ms-1">
          <div class="ln ln22">Nazwa linii trendu</div>
          <div class="ln ps-2 pt-1"><input class="rad me-1" type="radio" name="nm" id="n1" checked><label class="optn" for="n1"><u>A</u>utomatyczna</label><span>Potęg. (Lepkość zawiesiny η [Pa*s])</span></div>
          <div class="ln ln22 ps-2"><input class="rad me-1" type="radio" name="nm" id="n2"><label class="optn" for="n2"><u>N</u>iestandardowa</label><input class="fld fldw ms-1" disabled aria-label="Nazwa niestandardowa"></div>
          <div class="ln ln22">Prognoza</div>
          <div class="ln ps-2"><label class="flex-grow-1" for="f1"><u>D</u>o przodu</label><input class="fld" id="f1" value="0,0"><span class="unit">okresy</span></div>
          <div class="ln ps-2"><label class="flex-grow-1" for="f2">Do t<u>y</u>łu</label><input class="fld" id="f2" value="0,0"><span class="unit">okresy</span></div>
          <div class="ln fgrey"><input class="chk me-1" type="checkbox" id="k1" disabled><label class="flex-grow-1" for="k1"><u>U</u>staw przecięcie</label><input class="fld me-1" value="0,0" disabled aria-label="Przecięcie"></div>
          <div class="ln"><span class="position-relative d-flex me-1"><input class="chk" type="checkbox" id="k2" checked><svg class="position-absolute" width="12" height="12" viewBox="0 0 12 12"><path d="m3 6 2.500 2.500L9.500 3" fill="none" stroke="#555" stroke-width="1.400"/></svg></span><label for="k2">Wyświ<u>e</u>tl równanie na wykresie</label></div>
        </div>
      </div>
      <div class="vs d-flex flex-column mb-3">
        <button class="sb" aria-label="W górę"><i class="up"></i></button>
        <div class="trk flex-grow-1"><div class="thumb v80"></div></div>
        <button class="sb" aria-label="W dół"><i class="dn"></i></button>
      </div>
    </div>
  </aside>
</main>

<footer class="xl-status d-flex align-items-center pe-3">
  <span class="flex-grow-1 ps-2"><small>GOTOWY</small></span>
  <button class="vw on" aria-label="Normalny"><svg width="11" height="11" viewBox="0 0 11 11"><path d="M.5.500h10v10H.5zM4 0v11M7 0v11M0 4h11M0 7h11" fill="none" stroke="#dcebe3"/></svg></button>
  <button class="vw" aria-label="Układ strony"><svg width="11" height="11" viewBox="0 0 11 11"><path d="M.5.500h10v10H.5zM3 2.500h5v6H3zM4.500 4.500h2M4.500 6.500h2" fill="none" stroke="#b5d0c2"/></svg></button>
  <button class="vw" aria-label="Podział stron"><svg width="11" height="11" viewBox="0 0 11 11"><path d="M.5.500h10v9H.5z" fill="none" stroke="#b5d0c2"/><path d="M1 0h3v6H1zM5 0h3v6H5z" fill="#fff"/></svg></button>
  <button class="zoomout" aria-label="Pomniejsz"><svg width="8" height="8" viewBox="0 0 8 8"><path d="M0 4h8" stroke="#fff" stroke-width="2"/></svg></button>
  <input class="zoom0" type="range" min="0" max="100" value="50" aria-label="Powiększenie">
  <button aria-label="Powiększ"><svg width="8" height="8" viewBox="0 0 8 8"><path d="M0 4h8M4 0v8" stroke="#fff" stroke-width="2"/></svg></button>
  <span class="zoomtext"><small>110%</small></span>
</footer>
</div>

<script>
// Worksheet rows: label, then values for columns B–G, then the note in column I
const data = {
  1: ['Temperatura <b><i>t</i></b>&nbsp; [<sup>o</sup>C]', ['10','20','30','40','50','60'], 'Postać równania:'],
  2: ['Lepkość zawiesiny <b><i>μ</i></b>&nbsp; [cP]', ['260','220','185','161','144','129'], ''],
  4: ['Temperatura T [K]', ['283,15','293,15','303,15','313,15','323,15','333,15'], ''],
  5: ['Lepkość zawiesiny η <span class="big">[Pa*s]</span>', ['0,26','0,22','0,185','0,161','0,144','0,129'], 'Wymagane jednostki:']
};
const tall = [1, 2, 5], low = [4, 7];
let html = '';
for (let r = 1; r <= 40; r++) {
  const d = data[r] || ['', ['','','','','',''], ''];
  const cls = tall.includes(r) ? 'h22' : (low.includes(r) || (r > 8 && r % 3 === 0)) ? 'h19' : 'h20';
  html += `<tr class="${cls}"><th>${r}</th><td>${d[0]}</td>` + d[1].map(v => `<td class="num">${v}</td>`).join('') + '<td></td>' +
    (d[2] ? `<td colspan="2">${d[2]}</td>` : '<td></td><td></td>') + '<td></td></tr>';
}
document.getElementById('rows').innerHTML = html;

// Trendline kinds: label, curve, spinner label
const kinds = [
  ['Wy<u>k</u>ładniczy', 'M3 18C12 18 20 14 22 2'],
  ['<u>L</u>iniowy', 'M3 18 22 2'],
  ['L<u>o</u>garytmiczny', 'M3 21C4 10 12 5 23 4'],
  ['<u>W</u>ielomianowy', 'M3 13C8 7 10 9 12 14c3 7 10 8 12-11', 'Kolejność'],
  ['Po<u>t</u>ęgowy', 'M3 18C12 18 20 14 22 2'],
  ['Średnia rucho<u>m</u>a', 'M3 14l5 5 5-11 5-4 5-2', 'Okre<u>s</u>']
];
document.getElementById('kinds').innerHTML = kinds.map(([label, curve, extra], i) => `
  <div class="opt"><svg width="26" height="24" viewBox="0 0 26 24"><path d="M.5 0v23.500H25" fill="none" stroke="#888"/><path d="${curve}" fill="none" stroke="#e0b478" stroke-width="1.300"/><path d="M3 14h1M7 13h1M11 11h1M17 16h1M14 6h1M23 7h1M6 20h1M19 2h1" stroke="#cf9a55"/></svg>
  <input class="rad me-1" type="radio" name="kind" id="t${i}" ${i === 4 ? 'checked' : ''}><label class="optn" for="t${i}">${label}</label>
  ${extra ? `<label class="lead0 fgrey" for="s${i}">${extra}</label><span class="spin"><input id="s${i}" value="2" disabled><svg width="7" height="12" viewBox="0 0 7 12"><path d="M0 4l3.500-3L7 4zM0 8l3.500 3L7 8z" fill="#bbb"/></svg></span>` : ''}</div>`).join('');
</script>
<script src="https://cdn.jsdelivr.net/npm/bootstrap@5.3.0/dist/js/bootstrap.bundle.min.js"></script>
</body>
</html>
